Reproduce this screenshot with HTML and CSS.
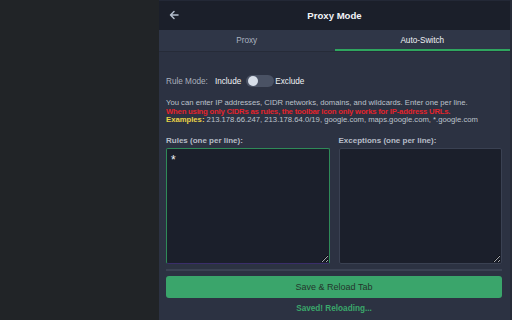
FILE: index.html
```html
<!DOCTYPE html>
<html lang="en">
<head>
  <meta charset="UTF-8">
  <title>Proxy Mode</title>
  <link rel="stylesheet" href="styles.css">
</head>
<body>

  <div class="backdrop"></div>

  <div class="panel">
    <div class="header">
      <button class="back-btn" aria-label="Back">
        <svg width="10" height="10" viewBox="0 0 10 10">
          <path d="M9 5H1.5M5 1.5L1.5 5L5 8.5" fill="none" stroke="#b3bdcc" stroke-width="1.5" stroke-linecap="round" stroke-linejoin="round"/>
        </svg>
      </button>
      <h1>Proxy Mode</h1>
    </div>

    <div class="tabs">
      <div class="tab">Proxy</div>
      <div class="tab active">Auto-Switch</div>
    </div>

    <div class="content">
      <div class="rule-mode">
        <span class="muted">Rule Mode:</span>
        <span class="opt">Include</span>
        <span class="toggle"><span class="knob"></span></span>
        <span class="opt exclude">Exclude</span>
      </div>

      <div class="desc">
        <p>You can enter IP addresses, CIDR networks, domains, and wildcards. Enter one per line.</p>
        <p class="warn">When using only CIDRs as rules, the toolbar icon only works for IP-address URLs.</p>
        <p><b class="ex">Examples:</b> 213.178.66.247, 213.178.64.0/19, google.com, maps.google.com, *.google.com</p>
      </div>

      <div class="lists">
        <div class="list">
          <label for="rules">Rules (one per line):</label>
          <textarea id="rules" class="focused">*</textarea>
        </div>
        <div class="list">
          <label for="exceptions">Exceptions (one per line):</label>
          <textarea id="exceptions"></textarea>
        </div>
      </div>

      <div class="divider"></div>

      <button class="save-btn">Save &amp; Reload Tab</button>
      <p class="status">Saved! Reloading...</p>
    </div>
  </div>

  <div class="edge"></div>

</body>
</html>
```

FILE: styles.css
```css
body {
  font-family: 'Liberation Sans', Arial, sans-serif;
  background-color: #212427;
  margin: 0;
  padding: 0;
  height: 320px;
  display: flex;
  overflow: hidden;
}

.backdrop {
  width: 159px;
  flex-shrink: 0;
}

.edge {
  width: 2px;
  background-color: #262b37;
}

.panel {
  width: 351px;
  background-color: #2c3242;
  display: flex;
  flex-direction: column;
}

.header {
  height: 30px;
  background-color: #1b1f2a;
  border-top: 1px solid #232836;
  box-sizing: border-box;
  display: flex;
  align-items: center;
  justify-content: center;
  position: relative;
}

.header h1 {
  margin: 0;
  font-size: 9.6px;
  font-weight: bold;
  color: #f2f4f7;
}

.back-btn {
  position: absolute;
  left: 10px;
  top: 9px;
  background: none;
  border: none;
  padding: 0;
  width: 10px;
  height: 10px;
  display: flex;
}

.tabs {
  height: 21px;
  display: flex;
  background-color: #2f3647;
  border-bottom: 1px solid #262b38;
}

.tab {
  flex: 1;
  display: flex;
  align-items: center;
  justify-content: center;
  font-size: 8.2px;
  color: #aab2c0;
  border-bottom: 2px solid transparent;
  padding-top: 2px;
}

.tab.active {
  color: #f0f2f5;
  border-bottom-color: #2fa65f;
}

.content {
  padding: 0 8px 0 7px;
}

.rule-mode {
  margin-top: 23px;
  height: 12px;
  display: flex;
  align-items: center;
  font-size: 8.2px;
}

.muted {
  color: #a9b0bc;
  margin-right: 7px;
}

.opt {
  color: #f1f3f6;
}

.toggle {
  width: 28px;
  height: 12px;
  border-radius: 6px;
  background-color: #4a5264;
  margin: 0 1px 0 5px;
  display: flex;
  align-items: center;
  padding-left: 2px;
  box-sizing: border-box;
}

.knob {
  width: 10px;
  height: 10px;
  border-radius: 50%;
  background-color: #d7dee8;
}

.desc {
  margin-top: 12px;
  font-size: 7.7px;
  line-height: 8.7px;
  color: #bcc2cc;
}

.desc p {
  margin: 0;
  white-space: nowrap;
}

.desc .warn {
  color: #e3232b;
  font-weight: bold;
  letter-spacing: -0.2px;
}

.desc .ex {
  color: #e8d247;
}

.lists {
  margin-top: 11px;
  display: flex;
  gap: 9px;
}

.list {
  flex: 1;
  min-width: 0;
  display: flex;
  flex-direction: column;
}

.list label {
  font-size: 8px;
  line-height: 10px;
  font-weight: bold;
  color: #b7bdc8;
  margin-bottom: 2px;
}

textarea {
  width: 100%;
  height: 116px;
  box-sizing: border-box;
  background-color: #1b1f2b;
  border: 1px solid #3a4152;
  border-radius: 2px;
  color: #f2f4f7;
  font-family: 'Liberation Sans', Arial, sans-serif;
  font-size: 12px;
  line-height: 14px;
  padding: 4px 4px;
  resize: vertical;
  outline: none;
}

textarea.focused {
  border-color: #2f8a58;
  border-bottom-color: #3a2e6a;
}

.divider {
  margin-top: 5px;
  height: 2px;
  background-color: #3b4253;
}

.save-btn {
  display: block;
  width: 100%;
  margin-top: 5px;
  height: 22px;
  background-color: #3aa56b;
  color: #24352c;
  border: none;
  border-radius: 3px;
  font-family: 'Liberation Sans', Arial, sans-serif;
  font-size: 9px;
  cursor: pointer;
}

.status {
  margin: 6px 0 0;
  text-align: center;
  font-size: 8.2px;
  line-height: 10px;
  font-weight: bold;
  color: #3aa86b;
}
```
